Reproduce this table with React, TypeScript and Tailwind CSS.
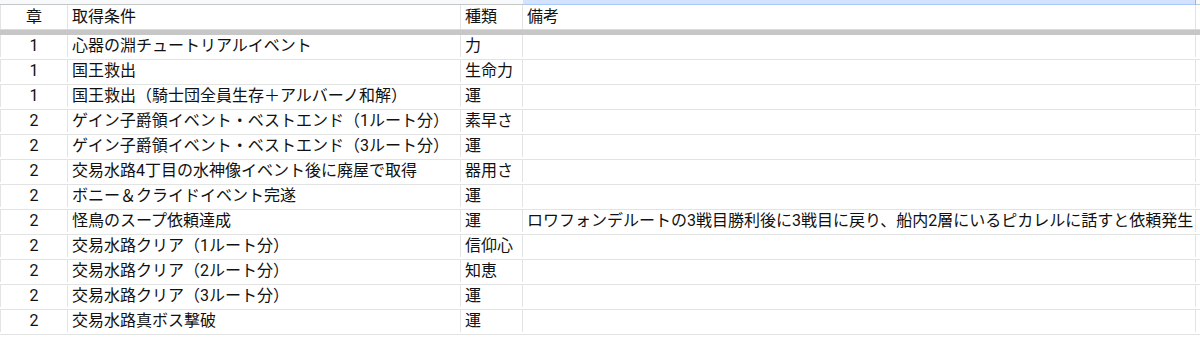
import React from 'react';

type Row = { ch: string; cond: string; kind: string; note?: string };

const rows: Row[] = [
	{ ch: '1', cond: '心器の淵チュートリアルイベント', kind: '力' },
	{ ch: '1', cond: '国王救出', kind: '生命力' },
	{ ch: '1', cond: '国王救出（騎士団全員生存＋アルバーノ和解）', kind: '運' },
	{ ch: '2', cond: 'ゲイン子爵領イベント・ベストエンド（1ルート分）', kind: '素早さ' },
	{ ch: '2', cond: 'ゲイン子爵領イベント・ベストエンド（3ルート分）', kind: '運' },
	{ ch: '2', cond: '交易水路4丁目の水神像イベント後に廃屋で取得', kind: '器用さ' },
	{ ch: '2', cond: 'ボニー＆クライドイベント完遂', kind: '運' },
	{
		ch: '2',
		cond: '怪鳥のスープ依頼達成',
		kind: '運',
		note: 'ロワフォンデルートの3戦目勝利後に3戦目に戻り、船内2層にいるピカレルに話すと依頼発生',
	},
	{ ch: '2', cond: '交易水路クリア（1ルート分）', kind: '信仰心' },
	{ ch: '2', cond: '交易水路クリア（2ルート分）', kind: '知恵' },
	{ ch: '2', cond: '交易水路クリア（3ルート分）', kind: '運' },
	{ ch: '2', cond: '交易水路真ボス撃破', kind: '運' },
];

const font = { fontFamily: 'Roboto, "Noto Sans CJK JP", sans-serif' };

const Cells: React.FC<{ r: Row; header?: boolean }> = ({ r, header }) => (
	<div
		className={`flex ${header ? 'h-[24px]' : 'h-[25px] border-b border-[#e2e3e3] pb-[2px]'} text-[16px] leading-[20px] text-[#111]`}
	>
		<div className="w-[68px] shrink-0 border-x border-[#e2e3e3] flex items-center justify-center">{r.ch}</div>
		<div className="w-[393px] shrink-0 border-r border-[#e2e3e3] flex items-center pl-[4px] whitespace-nowrap overflow-hidden">{r.cond}</div>
		<div className="w-[62px] shrink-0 border-r border-[#e2e3e3] flex items-center pl-[4px] whitespace-nowrap overflow-hidden">{r.kind}</div>
		<div className="w-[673px] shrink-0 border-r border-[#e2e3e3] flex items-center pl-[4px] whitespace-nowrap overflow-hidden">{r.note ?? ''}</div>
	</div>
);

export default function App() {
	return (
		<div className="w-[1200px] h-[339px] bg-white overflow-hidden" style={font}>
			{/* column header strip */}
			<div className="flex h-[5px]">
				<div className="w-[523px] shrink-0 bg-[#f8f9fa] border-b border-[#c4c7c5]" />
				<div className="w-[673px] shrink-0 bg-[#d3e3fd] border-b border-[#a8c7fa] border-r border-r-[#8ab4f8]" />
				<div className="flex-1 bg-[#f8f9fa] border-b border-[#c4c7c5]" />
			</div>
			<Cells r={{ ch: '章', cond: '取得条件', kind: '種類', note: '備考' }} header />
			{/* frozen row divider */}
			<div className="h-[6px] bg-[#c7c7c7] border-t border-[#dadada]" />
			{rows.map((r, i) => (
				<Cells key={i} r={r} />
			))}
		</div>
	);
}
